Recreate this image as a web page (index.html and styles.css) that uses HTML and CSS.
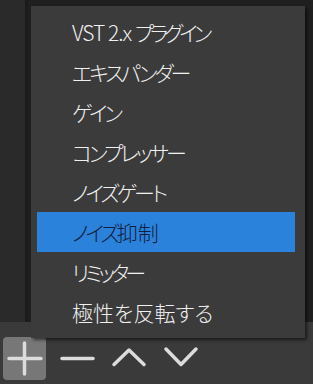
FILE: index.html
```html
<!DOCTYPE html>
<html lang="ja">
<head>
    <meta charset="UTF-8">
    <meta name="viewport" content="width=device-width, initial-scale=1.0">
    <title>フィルタ追加</title>
    <link rel="stylesheet" href="styles.css">
</head>
<body>
    <div class="panel">
        <div class="side"></div>
        <div class="list"></div>
    </div>
    <div class="toolbar">
        <button class="tool active" title="追加">
            <svg width="43" height="43" viewBox="0 0 43 43"><path d="M6 21.5H38M21.5 6V37"/></svg>
        </button>
        <button class="tool" title="削除">
            <svg width="43" height="43" viewBox="0 0 43 43"><path d="M7 21.5H38"/></svg>
        </button>
        <button class="tool" title="上へ">
            <svg width="43" height="43" viewBox="0 0 43 43"><path d="M7 27.5L22 13L37 27.5"/></svg>
        </button>
        <button class="tool" title="下へ">
            <svg width="43" height="43" viewBox="0 0 43 43"><path d="M7 12L22 27.5L37 12"/></svg>
        </button>
    </div>

    <!-- popup menu -->
    <ul class="menu">
        <li><span class="latin">VST 2.x </span><span class="kana tight">プラグイン</span></li>
        <li><span class="kana">エキスパンダー</span></li>
        <li><span class="kana">ゲイン</span></li>
        <li><span class="kana">コンプレッサー</span></li>
        <li><span class="kana">ノイズゲート</span></li>
        <li class="selected"><span class="kana">ノイズ</span>抑制</li>
        <li><span class="kana narrow">リミッター</span></li>
        <li>極性を反転する</li>
    </ul>
</body>
</html>
```

FILE: styles.css
```css
* {
    margin: 0;
    padding: 0;
    box-sizing: border-box;
}

body {
    width: 313px;
    height: 384px;
    overflow: hidden;
    background-color: #3a3a3a;
    font-family: "Noto Sans CJK JP", "Noto Sans", sans-serif;
    position: relative;
}

.panel {
    display: flex;
    height: 322px;
}

.side {
    width: 28px;
    background-color: #2a2a2a;
    border-right: 3px solid #1b1b1b;
}

.list {
    flex: 1;
    background-color: #1f1f1f;
}

.toolbar {
    display: flex;
    gap: 9px;
    padding: 15px 0 0 3px;
    height: 62px;
}

.tool {
    width: 43px;
    height: 43px;
    border: none;
    border-radius: 4px;
    background: transparent;
    display: flex;
}

.tool.active {
    background-color: #777777;
}

.tool svg path {
    fill: none;
    stroke: #dcdcdc;
    stroke-width: 3.5;
    stroke-linecap: round;
    stroke-linejoin: round;
}

.menu {
    position: absolute;
    left: 31px;
    top: 6px;
    width: 274px;
    height: 332px;
    padding: 6px 10px 6px 6px;
    list-style: none;
    background-color: #3b3b3b;
    box-shadow: 2px 2px 3px rgba(0, 0, 0, 0.55);
    z-index: 2;
}

.menu li {
    height: 40px;
    line-height: 40px;
    padding-left: 35px;
    font-size: 21px;
    font-weight: 300;
    color: #f0f0f0;
    font-feature-settings: "palt";
    white-space: nowrap;
}

.menu li .latin {
    letter-spacing: -1px;
}

.menu li .kana {
    letter-spacing: -3px;
}

.menu li .tight {
    letter-spacing: -4px;
}

.menu li .narrow {
    letter-spacing: -4px;
}

.menu li.selected {
    background-color: #2a82da;
    color: #0f1f3f;
}
```
